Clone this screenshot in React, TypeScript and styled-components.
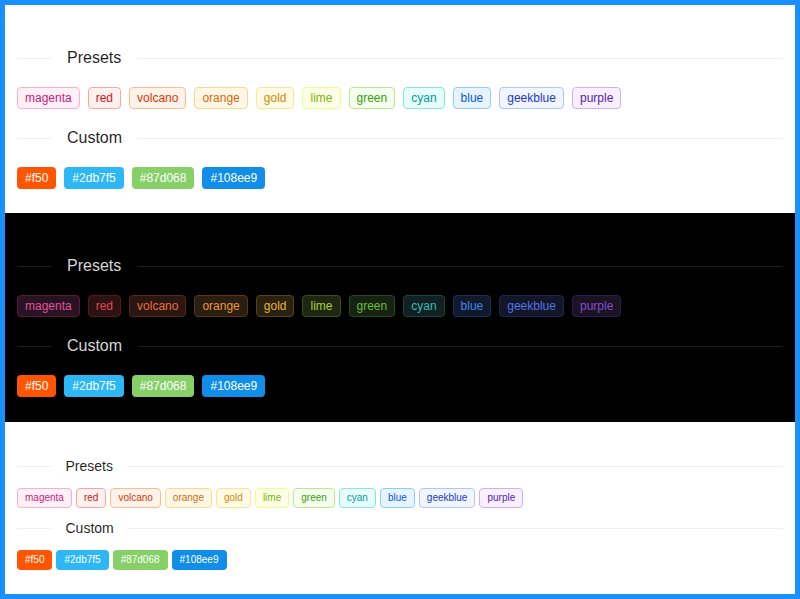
import React from "react";
import styled, { createGlobalStyle, css } from "styled-components";

type Mode = "light" | "dark" | "compact";

const GlobalStyle = createGlobalStyle`
  html, body {
    margin: 0;
    padding: 0;
    background: #ffffff;
  }
  body {
    font-family: "Liberation Sans", Arial, sans-serif;
  }
  * { box-sizing: border-box; }
`;

const Frame = styled.div`
  height: 599px;
  border: 5px solid #1890ff;
  display: flex;
  flex-direction: column;
  overflow: hidden;
`;

const Section = styled.section<{ $mode: Mode }>`
  padding: 24px 12px ${(p) => (p.$mode === "dark" ? "25px" : "24px")};
  background: ${(p) => (p.$mode === "dark" ? "#000000" : "#ffffff")};
`;

const Divider = styled.div<{ $mode: Mode }>`
  display: flex;
  align-items: center;
  white-space: nowrap;
  color: ${(p) => (p.$mode === "dark" ? "rgba(255,255,255,0.85)" : "rgba(0,0,0,0.88)")};
  ${(p) =>
    p.$mode === "compact"
      ? css`
          font-size: 14px;
          line-height: 22px;
          margin: 9px 0 11px;
        `
      : css`
          font-size: 16px;
          line-height: 26px;
          margin: 16px 0;
        `}
  &::before,
  &::after {
    content: "";
    border-top: 1px solid
      ${(p) => (p.$mode === "dark" ? "rgba(253,253,253,0.12)" : "rgba(5,5,5,0.06)")};
  }
  &::before {
    width: 5%;
  }
  &::after {
    width: 95%;
  }
`;

const DividerText = styled.span`
  display: inline-block;
  padding: 0 1em;
`;

const TagRow = styled.div`
  display: flex;
  flex-wrap: wrap;
  row-gap: 4px;
`;

const Tag = styled.span<{ $fg: string; $bg: string; $bd: string; $compact?: boolean }>`
  display: inline-block;
  height: ${(p) => (p.$compact ? "20px" : "22px")};
  padding: 0 7px;
  margin-right: ${(p) => (p.$compact ? "4px" : "8px")};
  font-size: ${(p) => (p.$compact ? "10px" : "12px")};
  line-height: ${(p) => (p.$compact ? "18px" : "20px")};
  white-space: nowrap;
  border-radius: 4px;
  border: 1px solid ${(p) => p.$bd};
  background: ${(p) => p.$bg};
  color: ${(p) => p.$fg};
`;

type Palette = { name: string; fg: string; bg: string; bd: string };

const lightPresets: Palette[] = [
  { name: "magenta", fg: "#c41d7f", bg: "#fff0f6", bd: "#ffadd2" },
  { name: "red", fg: "#cf1322", bg: "#fff1f0", bd: "#ffa39e" },
  { name: "volcano", fg: "#d4380d", bg: "#fff2e8", bd: "#ffbb96" },
  { name: "orange", fg: "#d46b08", bg: "#fff7e6", bd: "#ffd591" },
  { name: "gold", fg: "#d48806", bg: "#fffbe6", bd: "#ffe58f" },
  { name: "lime", fg: "#7cb305", bg: "#fcffe6", bd: "#eaff8f" },
  { name: "green", fg: "#389e0d", bg: "#f6ffed", bd: "#b7eb8f" },
  { name: "cyan", fg: "#08979c", bg: "#e6fffb", bd: "#87e8de" },
  { name: "blue", fg: "#0958d9", bg: "#e6f4ff", bd: "#91caff" },
  { name: "geekblue", fg: "#1d39c4", bg: "#f0f5ff", bd: "#adc6ff" },
  { name: "purple", fg: "#531dab", bg: "#f9f0ff", bd: "#d3adf7" },
];

const darkPresets: Palette[] = [
  { name: "magenta", fg: "#e0529c", bg: "#291321", bd: "#551c3b" },
  { name: "red", fg: "#e84749", bg: "#2a1215", bd: "#58181c" },
  { name: "volcano", fg: "#e87040", bg: "#2b1611", bd: "#592716" },
  { name: "orange", fg: "#e89a3c", bg: "#2b1d11", bd: "#593815" },
  { name: "gold", fg: "#e8b339", bg: "#2b2111", bd: "#594214" },
  { name: "lime", fg: "#a9d134", bg: "#1f2611", bd: "#3e4f13" },
  { name: "green", fg: "#6abe39", bg: "#162312", bd: "#274916" },
  { name: "cyan", fg: "#33bcb7", bg: "#112123", bd: "#144848" },
  { name: "blue", fg: "#3c89e8", bg: "#111a2c", bd: "#15325b" },
  { name: "geekblue", fg: "#5273e0", bg: "#131629", bd: "#1c2755" },
  { name: "purple", fg: "#854eca", bg: "#1a1325", bd: "#301c4d" },
];

const customColors = ["#f50", "#2db7f5", "#87d068", "#108ee9"];

function Demo({ mode }: { mode: Mode }) {
  const presets = mode === "dark" ? darkPresets : lightPresets;
  const compact = mode === "compact";
  return (
    <Section $mode={mode}>
      <Divider $mode={mode}>
        <DividerText>Presets</DividerText>
      </Divider>
      <TagRow>
        {presets.map((p) => (
          <Tag key={p.name} $fg={p.fg} $bg={p.bg} $bd={p.bd} $compact={compact}>
            {p.name}
          </Tag>
        ))}
      </TagRow>
      <Divider $mode={mode}>
        <DividerText>Custom</DividerText>
      </Divider>
      <TagRow>
        {customColors.map((c) => (
          <Tag key={c} $fg="#ffffff" $bg={c} $bd="transparent" $compact={compact}>
            {c}
          </Tag>
        ))}
      </TagRow>
    </Section>
  );
}

export default function App() {
  return (
    <>
      <GlobalStyle />
      <Frame>
        <Demo mode="light" />
        <Demo mode="dark" />
        <Demo mode="compact" />
      </Frame>
    </>
  );
}
